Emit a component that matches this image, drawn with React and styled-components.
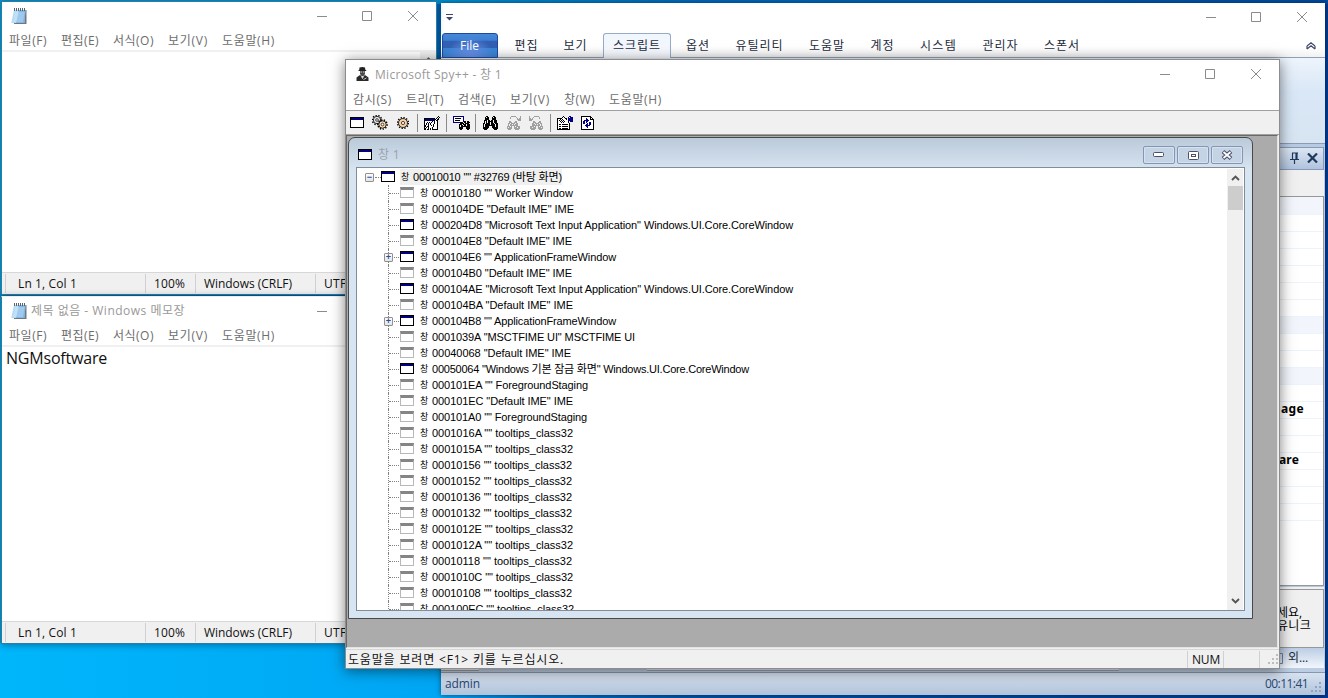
import { useLayoutEffect, useRef, useState } from "react";
import styled, { createGlobalStyle, css } from "styled-components";

const TREE = [
  { text: '00010180 "" Worker Window', w: 141 },
  { text: '000104DE "Default IME" IME', w: 142 },
  { text: '000204D8 "Microsoft Text Input Application" Windows.UI.Core.CoreWindow', w: 361, on: true },
  { text: '000104E8 "Default IME" IME', w: 140 },
  { text: '000104E6 "" ApplicationFrameWindow', w: 184, on: true, plus: true },
  { text: '000104B0 "Default IME" IME', w: 140 },
  { text: '000104AE "Microsoft Text Input Application" Windows.UI.Core.CoreWindow', w: 361, on: true },
  { text: '000104BA "Default IME" IME', w: 141 },
  { text: '000104B8 "" ApplicationFrameWindow', w: 184, on: true, plus: true },
  { text: '0001039A "MSCTFIME UI" MSCTFIME UI', w: 203 },
  { text: '00040068 "Default IME" IME', w: 139 },
  { text: '00050064 "Windows 기본 잠금 화면" Windows.UI.Core.CoreWindow', w: 317, on: true },
  { text: '000101EA "" ForegroundStaging', w: 156 },
  { text: '000101EC "Default IME" IME', w: 141 },
  { text: '000101A0 "" ForegroundStaging', w: 155 },
  { text: '0001016A "" tooltips_class32', w: 141 },
  { text: '0001015A "" tooltips_class32', w: 141 },
  { text: '00010156 "" tooltips_class32', w: 140 },
  { text: '00010152 "" tooltips_class32', w: 140 },
  { text: '00010136 "" tooltips_class32', w: 140 },
  { text: '00010132 "" tooltips_class32', w: 140 },
  { text: '0001012E "" tooltips_class32', w: 141 },
  { text: '0001012A "" tooltips_class32', w: 141 },
  { text: '00010118 "" tooltips_class32', w: 140 },
  { text: '0001010C "" tooltips_class32', w: 141 },
  { text: '00010108 "" tooltips_class32', w: 140 },
  { text: '000100EC "" tooltips_class32', w: 142 },
];

const NOTE_MENU = [["파일(F)", 38], ["편집(E)", 38], ["서식(O)", 41], ["보기(V)", 40], ["도움말(H)", 53]];
const SPY_MENU = [["감시(S)", 39], ["트리(T)", 38], ["검색(E)", 38], ["보기(V)", 40], ["창(W)", 31], ["도움말(H)", 53]];

// [label, slot width, text width]
const TABS = [
  ["편집", 49, 24],
  ["보기", 49, 24],
  ["스크립트", 73, 48],
  ["옵션", 50, 24],
  ["유틸리티", 73, 48],
  ["도움말", 62, 36],
  ["계정", 49, 24],
  ["시스템", 63, 37],
  ["관리자", 61, 36],
  ["스폰서", 62, 36],
];

const PROPS = Array.from({ length: 19 }, (_, i) => ({
  head: i === 0 || i === 7 || i === 10,
  text: i === 12 ? "age" : i === 15 ? "are" : "",
}));

const BINOCULARS = [
  "...##.....##...",
  "..#.##...#.##..",
  "..####...####..",
  "..####...####..",
  ".###.##.##.###.",
  ".#.#.#####.###.",
  ".#.#.##.##.###.",
  "##.####.###.###",
  "#.#####.####.##",
  "#.##########.##",
  "#.####...###.##",
  "######...######",
  "#####.....#####",
  ".###.......###.",
];

const FIND_GREY = [
  "....#####....#",
  "...#.....#...#",
  "...#......#.##",
  "..........####",
  "...........###",
  "..##....##....",
  "..###..###....",
  ".##.####.##...",
  ".#.##.#.###...",
  ".#.########...",
  "###.#..#.####.",
  "#.###..###.##.",
  "#####..######.",
  ".###....####..",
];

const FIND_WINDOW = [
  "nnnnnnnnnnn......",
  "nwwwwwwwwwn......",
  "nwkkkkkkwwn......",
  "nwwwwwwwwwn......",
  "nwkkkkkwwwn......",
  "nwwwwwwwwwn##.##.",
  "nnnnnnn###.##.###",
  ".......####.####.",
  "......###.###.###",
  "......#.##.##.###",
  "......#.#########",
  "......####...####",
  "......####...####",
  ".......##.....##.",
];

const HAND_WINDOW = [
  "..............#.",
  ".............#.#",
  "kkkkkkkkkkk.#w#.",
  "knnnnnnnnnn#w##.",
  "knnnnnnnnn#w#k..",
  "kwwwwwww#w#wwk..",
  "kww#w#w#ww#wwk..",
  "kw#w#w#www#wwk..",
  "kw#w#w#ww#wwwk..",
  "k#ww#ww#w#wwwk..",
  "k#w##wwww#wwwk..",
  "kw#w#www#wwwwk..",
  "k#ww#w#w#wwwwk..",
  "kk.kk.k.kkkkkk..",
];

const PROPERTIES = [
  "......#.....nn..",
  ".....#w#...nwnnn",
  "kkkk#www##.nnnnn",
  "kww#w#www#wnnnnn",
  "kw#w#w#wwwwnnnnn",
  "kww#w#w#wwwk.nnn",
  "kwww#w#wwwwk....",
  "kwwwwwwwwwwwk...",
  "kwkkwkkkkkkwk...",
  "kwwwwwwwwwwwk...",
  "kwkkwkkkkkkwk...",
  "kwwwwwwwwwwwk...",
  "kwkkwkkkkkkwk...",
  "kkkkkkkkkkkkk...",
];

const REFRESH = [
  "kkkkkkkkkk...",
  "kwwwwwwwwkk..",
  "kwwwwnwwwkwk.",
  "kwwwwnnwwkkkk",
  "kwwnnnnnwwwwk",
  "kwnnwnnwwwwwk",
  "kwnnwnwwnnwwk",
  "kwnnwwnwnnwwk",
  "kwwwwnnwnnwwk",
  "kwwwnnnnnwwwk",
  "kwwwwnnwwwwwk",
  "kwwwwwnwwwwwk",
  "kwwwwwwwwwwwk",
  "kkkkkkkkkkkkk",
];

const COLORS = { "#": "#000", k: "#000", n: "#000080", w: "#fff" };

function Pixels({ map, color }) {
  return (
    <svg width={map[0].length} height={map.length} shapeRendering="crispEdges">
      {map.flatMap((row, y) =>
        [...row].map((c, x) =>
          c === "." ? null : <rect key={`${x}-${y}`} x={x} y={y} width="1" height="1" fill={color || COLORS[c]} />
        )
      )}
    </svg>
  );
}

// Spreads its letters so that the text takes exactly w pixels
function Fit({ w, children }) {
  const ref = useRef(null);
  const [spacing, setSpacing] = useState(0);

  useLayoutEffect(() => {
    const natural = ref.current.getBoundingClientRect().width;
    setSpacing((w - natural) / [...children].length);
  // eslint-disable-next-line react-hooks/exhaustive-deps
  }, []);

  return (
    <FitBox $w={w}>
      <span ref={ref} style={{ letterSpacing: spacing }}>{children}</span>
    </FitBox>
  );
}

function NoteIcon() {
  return (
    <svg width="16" height="17" viewBox="0 0 16 17">
      <path d="M3 2h12.500v14H3z" fill="#6f7880" />
      <path d="M3 2h11.500L13.500 15H.3z" fill="#b4daf5" />
      <path d="M8 2h6.500l-1 13H5z" fill="#5f9fdc" opacity=".6" />
      <path d="M4 5h9.500M3.600 7h9.500M3.300 9h9.500M3 11h9.500M2 13h10" stroke="#d9ecfa" strokeWidth=".7" />
      <path d="M3.500 0v3M5.500 0v3M7.500 0v3M9.500 0v3M11.500 0v3M13.500 0v3" stroke="#59636b" strokeWidth="1" />
    </svg>
  );
}

function SpyIcon() {
  return (
    <svg width="13" height="15" viewBox="0 0 13 15">
      <path d="M3.500.5Q6.500-.5 9 .5l.4 2.500h.8v1H2.500V3h.7z" fill="#222" />
      <path d="M4 4h5v3L7.500 9h-2L4 7z" fill="#4a4a4a" />
      <path d="M4.500 5h1.500M7 5h1.500" stroke="#ccc" />
      <path d="M.5 10.500L4 8l2.500 2L9 8l3.500 2.500v3.500H.5z" fill="#2a2a2a" />
      <path d="M5.500 9.500l1 2 1-2zM7.500 12.500L10.500 11" stroke="#ddd" fill="#ddd" strokeWidth=".8" />
    </svg>
  );
}

function Gear({ x, y, r, fill }) {
  return (
    <g>
      <circle cx={x} cy={y} r={r + 0.6} fill="none" stroke="#000" strokeWidth="1.500" strokeDasharray="1.300 1.500" />
      <circle cx={x} cy={y} r={r - 0.3} fill={fill} stroke="#000" strokeWidth=".8" />
      <circle cx={x} cy={y} r={r * 0.33} fill="#fff" stroke="#333" strokeWidth=".9" />
    </g>
  );
}

function WindowButtons() {
  return (
    <Caption>
      <svg width="11" height="11"><path d="M1 5.500h10" stroke="#8b8b8b" /></svg>
      <svg width="11" height="11"><path d="M.5.5h9v9h-9z" stroke="#8b8b8b" fill="none" /></svg>
      <svg width="11" height="11"><path d="M0 0l10 10M10 0L0 10" stroke="#8b8b8b" /></svg>
    </Caption>
  );
}

function Arrow({ down }) {
  return (
    <svg width="9" height="7" viewBox="0 0 9 7">
      <path d={down ? "M1 1l3.500 3.500L8 1" : "M1 6l3.500-3.500L8 6"} fill="none" stroke="#555" strokeWidth="1.900" />
    </svg>
  );
}

function Grip({ color }) {
  return (
    <svg width="11" height="11" fill={color}>
      {[[8, 0], [8, 4], [4, 4], [8, 8], [4, 8], [0, 8]].map(([x, y]) => (
        <rect key={`${x}${y}`} x={x} y={y} width="2" height="2" />
      ))}
    </svg>
  );
}

function NoteStatus() {
  return (
    <NoteBar>
      <Cell $w={140} $pad={12}><Fit w={59}>Ln 1, Col 1</Fit></Cell>
      <Cell $w={50} $pad={8}><Fit w={31}>100%</Fit></Cell>
      <Cell $w={120} $pad={8}><Fit w={88}>Windows (CRLF)</Fit></Cell>
      <Cell $w={100} $pad={8}><Fit w={34}>UTF-8</Fit></Cell>
    </NoteBar>
  );
}

function Notepad({ top, height, title, text, scroll }) {
  return (
    <NoteWindow $top={top} $h={height}>
      <NoteTitle>
        <NoteIcon />
        <TitleText>{title && <Fit w={154}>{title}</Fit>}</TitleText>
        <WindowButtons />
      </NoteTitle>
      <NoteMenu>{NOTE_MENU.map(([label, w]) => <Fit key={label} w={w}>{label}</Fit>)}</NoteMenu>
      <NoteBody>
        <NoteText>{text && <Fit w={101}>{text}</Fit>}</NoteText>
        {scroll && <NoteScroll><Arrow /></NoteScroll>}
      </NoteBody>
      <NoteStatus />
    </NoteWindow>
  );
}

function MacroTool() {
  return (
    <MainWindow>
      <MainTitle>
        <svg width="8" height="7"><path d="M0 .5h7" stroke="#40466b" /><path d="M0 3h7L3.500 6.500z" fill="#40466b" /></svg>
        <WindowButtons />
      </MainTitle>
      <Tabs>
        <FileTab><Fit w={19}>File</Fit></FileTab>
        {TABS.map(([label, w, textWidth]) => (
          <Tab key={label} $w={w} $active={label === "스크립트"}>
            <Fit w={textWidth}>{label}</Fit>
          </Tab>
        ))}
        <Collapse>
          <svg width="10" height="8"><path d="M1 4L5 .8 9 4M1 7l4-3.200L9 7M1 4v3M9 4v3" fill="none" stroke="#40466b" strokeWidth="1.200" /></svg>
        </Collapse>
      </Tabs>
      <Ribbon />
      <Dock>
        <DockTitle>
          <svg width="9" height="12"><path d="M2 1h6M2.500 1v6M6 1v6M7 1v6M0 7.500h9M4.500 8v4" stroke="#1e395b" strokeWidth="1.200" /></svg>
          <svg width="11" height="10"><path d="M1 .5l9 9M10 .5l-9 9" stroke="#1e395b" strokeWidth="2.200" /></svg>
        </DockTitle>
        <DockTools />
        <PropertyList>
          {PROPS.map((p, i) => (
            <Property key={i} $head={p.head} $wide={i === 0} $shift={p.text === "age"}>
              {p.text && <Fit w={p.text === "age" ? 23 : 20}>{p.text}</Fit>}
            </Property>
          ))}
        </PropertyList>
        <Hint>
          <Fit w={25}>세요,</Fit>
          <Fit w={34}>유니크</Fit>
        </Hint>
        <DockTab>
          <svg width="7" height="11"><path d="M0 .5h5.500v10H0M2 2v7" fill="none" stroke="#6a86ad" /></svg>
          <Fit w={20}>외...</Fit>
        </DockTab>
      </Dock>
      <BottomEdge><i /><b /></BottomEdge>
      <MainStatus>
        <Fit w={35}>admin</Fit>
        <span />
        <Fit w={43}>00:11:41</Fit>
        <Grip color="#8fa5c6" />
      </MainStatus>
    </MainWindow>
  );
}

function Node({ node }) {
  return (
    <TreeRow>
      <Branch>
        {node.plus && <Expander>+</Expander>}
      </Branch>
      <WinIcon $on={node.on} />
      <NodeText>
        <Han>창</Han>
        <Fit w={node.w}>{node.text}</Fit>
      </NodeText>
    </TreeRow>
  );
}

function Spy() {
  return (
    <SpyWindow>
      <SpyTitle>
        <SpyIcon />
        <TitleText><Fit w={127}>Microsoft Spy++ - 창 1</Fit></TitleText>
        <WindowButtons />
      </SpyTitle>
      <SpyMenu>{SPY_MENU.map(([label, w]) => <Fit key={label} w={w}>{label}</Fit>)}</SpyMenu>
      <Toolbar>
        <Tool $w={22}><WinIcon $on /></Tool>
        <Tool $w={25}>
          <svg width="16" height="15" viewBox="0 0 16 15">
            <Gear x={5} y={5} r={4} fill="#e4e4e4" />
            <Gear x={10.5} y={9.5} r={4} fill="#f8d5a8" />
          </svg>
        </Tool>
        <Tool $w={20}>
          <svg width="12" height="12" viewBox="0 0 12 12">
            <Gear x={6} y={6} r={4.8} fill="#f8d0a0" />
          </svg>
        </Tool>
        <Sep />
        <Tool $w={22}><Pixels map={HAND_WINDOW} /></Tool>
        <Sep />
        <Tool $w={22}><Pixels map={FIND_WINDOW} /></Tool>
        <Sep $tight />
        <Tool $w={24}><Pixels map={BINOCULARS} /></Tool>
        <Tool $w={22}><Pixels map={FIND_GREY} color="#a0a0a0" /></Tool>
        <Flip $w={21}><Pixels map={FIND_GREY} color="#a0a0a0" /></Flip>
        <Sep />
        <Tool $w={24}><Pixels map={PROPERTIES} /></Tool>
        <Tool $w={14}><Pixels map={REFRESH} /></Tool>
      </Toolbar>
      <Mdi>
        <Child>
          <ChildTitle>
            <WinIcon $on />
            <span><Fit w={22}>창 1</Fit></span>
            <ChildButton><svg width="12" height="6"><rect x=".5" y=".5" width="10" height="4" rx="1" fill="#fff" stroke="#4a5068" /></svg></ChildButton>
            <ChildButton><svg width="11" height="9"><rect x=".5" y=".5" width="10" height="8" rx="1" fill="#fff" stroke="#4a5068" /><rect x="3.500" y="3.500" width="4" height="2" fill="#fff" stroke="#4a5068" /></svg></ChildButton>
            <ChildButton>
              <svg width="12" height="10"><path d="M2 1.500l8 7M10 1.500l-8 7" stroke="#4a5068" strokeWidth="4" /><path d="M2.500 2l7 6M9.500 2l-7 6" stroke="#fff" strokeWidth="1.800" /></svg>
            </ChildButton>
          </ChildTitle>
          <Client>
            <Tree>
              <Root>
                <Expander>−</Expander>
                <RootLine />
                <WinIcon $on />
                <RootText>
                  <Han>창</Han>
                  <Fit w={149}>00010010 "" #32769 (바탕 화면)</Fit>
                </RootText>
              </Root>
              {TREE.map((node) => <Node key={node.text} node={node} />)}
            </Tree>
            <Scroll>
              <Arrow />
              <Thumb />
              <Arrow down />
            </Scroll>
          </Client>
        </Child>
      </Mdi>
      <SpyStatus>
        <Message><Fit w={216}>{"도움말을 보려면 <F1> 키를 누르십시오."}</Fit></Message>
        <Cell $w={36} $pad={4}><Fit w={28}>NUM</Fit></Cell>
        <Cell $w={36} $pad={0} />
        <Cell $w={20} $pad={8}><Grip color="#bdbdbd" /></Cell>
      </SpyStatus>
    </SpyWindow>
  );
}

function App() {
  return (
    <Desktop>
      <GlobalStyle />
      <MacroTool />
      <Notepad top={1} height={294} scroll />
      <Notepad top={296} height={348} title="제목 없음 - Windows 메모장" text="NGMsoftware" />
      <Spy />
    </Desktop>
  );
}

const GlobalStyle = createGlobalStyle`
  * {
    box-sizing: border-box;
  }
  body {
    margin: 0;
    font: 12px/16px "Open Sans", "Noto Sans CJK KR", sans-serif;
    color: #111;
    overflow: hidden;
  }
  svg {
    display: block;
    flex: none;
  }
`;

const Desktop = styled.div`
  position: relative;
  width: 1328px;
  height: 698px;
  overflow: hidden;
  background:
    linear-gradient(90deg, #0896cf 0, #0090cc 440px, #0068b8 700px, #0060b0 1000px, #004a9c 1328px) 0 0 / 100% 4px no-repeat,
    linear-gradient(90deg, #0a88b8, #0060a8 440px) 0 294px / 440px 3px no-repeat,
    linear-gradient(180deg, #0068b8, #0060b0) 436px 0 / 5px 100px no-repeat,
    linear-gradient(90deg, #00b6fb 0, #00a6f4 440px, #0070c0 540px, #0050a0 700px, #003a8c 1328px) 0 643px / 100% 55px no-repeat,
    linear-gradient(90deg, #009fdc 0, #009fdc 440px, #003a94 441px);
`;

const FitBox = styled.span`
  display: inline-block;
  width: ${(p) => p.$w}px;
  flex: none;
  white-space: pre;
`;

const Window = styled.div`
  position: absolute;
  display: flex;
  flex-direction: column;
  overflow: hidden;
  background: #fff;
`;

const Caption = styled.div`
  display: flex;
  gap: 35px;
  margin-left: auto;
`;

const TitleText = styled.div`
  color: #999;
`;

const Menu = styled.div`
  display: flex;
  align-items: center;
  flex: none;
  gap: 14px;
  color: #6d6d6d;
`;

/* Notepad */

const NoteWindow = styled(Window)`
  left: 1px;
  top: ${(p) => p.$top}px;
  width: 436px;
  height: ${(p) => p.$h}px;
  border: 1px solid #2c7da3;
  border-top-color: ${(p) => (p.$top > 10 ? "#e8f0f4" : "#2c7da3")};
  box-shadow: 0 1px 7px rgba(0, 30, 60, 0.45);
`;

const NoteTitle = styled.div`
  display: flex;
  align-items: center;
  flex: none;
  height: 28px;
  padding: 0 17px 0 9px;
  gap: 4px;
`;

const NoteMenu = styled(Menu)`
  height: 20px;
  padding: 2px 0 0 7px;
`;

const NoteBody = styled.div`
  display: flex;
  flex: 1;
  border-top: 2px solid #f0f0f0;
`;

const NoteText = styled.div`
  flex: 1;
  padding: 3px 4px;
  font-size: 16px;
  line-height: 17px;
`;

const NoteScroll = styled.div`
  width: 16px;
  padding: 4px;
  background: #f0f0f0;
`;

const NoteBar = styled.div`
  display: flex;
  flex: none;
  height: 22px;
  padding: 1px 0 1px 3px;
  background: #f0f0f0;
  border-top: 1px solid #d7d7d7;
  overflow: hidden;
`;

const Cell = styled.div`
  display: flex;
  align-items: center;
  flex: none;
  width: ${(p) => p.$w}px;
  padding-left: ${(p) => p.$pad}px;
  border-left: 1px solid #d0d0d0;
`;

/* Macro tool */

const MainWindow = styled(Window)`
  left: 441px;
  top: 3px;
  width: 884px;
  height: 692px;
  background: #cfddee;
  box-shadow: 0 0 5px rgba(0, 20, 60, 0.6);
  color: #1e2b3c;
`;

const MainTitle = styled.div`
  display: flex;
  align-items: center;
  flex: none;
  height: 29px;
  padding: 0 17px 0 5px;
  background: #fff;
`;

const Tabs = styled.div`
  display: flex;
  flex: none;
  height: 26px;
  padding-left: 1px;
  background: linear-gradient(#fff 60%, #f1f1f1);
  border-bottom: 1px solid #8fa0b5;
`;

const FileTab = styled.div`
  display: flex;
  align-items: center;
  justify-content: center;
  width: 56px;
  height: 25px;
  margin: 1px 4px 0 0;
  padding-right: 1px;
  color: #fff;
  border: 1px solid #1f48a1;
  border-radius: 3px 3px 0 0;
  background:
    radial-gradient(ellipse at 50% 120%, #6c98ea 0, #5b8be2 30%, transparent 65%),
    linear-gradient(#4788d8 0, #3c7fd2 28%, #3460b4 29%, #3460b4 62%, #3b84d6 63%);
`;

const Tab = styled.div`
  display: flex;
  align-items: center;
  justify-content: center;
  width: ${(p) => p.$w}px;
  height: 25px;
  padding-top: 2px;
  ${(p) => p.$active && css`
    width: 68px;
    margin: 1px 2px 0 3px;
    padding: 0;
    border: 1px solid #97abc6;
    border-bottom: 0;
    border-radius: 3px 3px 0 0;
    background: linear-gradient(#f0f6fd, #f7faff);
  `}
`;

const Collapse = styled.div`
  margin: 10px 9px 0 auto;
`;

const Ribbon = styled.div`
  flex: none;
  height: 86px;
  background: linear-gradient(#edf4fc, #d9e7f6 40%, #d7e5f3);
  border-bottom: 1px solid #8a9bb3;
`;

const Dock = styled.div`
  display: flex;
  flex-direction: column;
  align-self: flex-end;
  flex: 1;
  width: 60px;
  padding: 3px 1px 0 0;
  background: #b8cae2;
`;

const DockTitle = styled.div`
  display: flex;
  align-items: center;
  justify-content: flex-end;
  gap: 8px;
  height: 23px;
  flex: none;
  padding: 0 5px 1px 0;
  border: 1px solid #859ab9;
  border-left: 0;
  background: linear-gradient(#dbe5f3, #b0c3de);
`;

const DockTools = styled.div`
  flex: none;
  height: 26px;
  background: #f0f0f0;
`;

const PropertyList = styled.div`
  flex: none;
  height: 390px;
  border: 1px solid #979797;
  border-left: 0;
  background: #fff;
`;

const Property = styled.div`
  height: ${(p) => (p.$wide ? 18 : 17)}px;
  padding-left: ${(p) => (p.$shift ? 16 : 14)}px;
  background: ${(p) => (p.$head ? "#f2f6fc" : "#fff")};
  border-bottom: 1px solid #edf3fb;
  font: bold 12px/13px "Noto Sans", sans-serif;
  color: #000;
`;

const Hint = styled.div`
  display: flex;
  flex-direction: column;
  height: 59px;
  margin-top: 3px;
  padding: 16px 0 0 12px;
  line-height: 13px;
  border: 1px solid #979797;
  border-left: 0;
  background: #f0f0f0;
  box-shadow: 0 -2px #f0f0f0;
  color: #000;
`;

const DockTab = styled.div`
  display: flex;
  align-items: center;
  gap: 4px;
  height: 20px;
  padding-left: 12px;
  background: linear-gradient(#bccde4, #f3f7fc);
`;

const BottomEdge = styled.div`
  display: flex;
  justify-content: space-between;
  flex: none;
  height: 5px;
  background: #bccce2;
  border-bottom: 1px solid #8797b0;
  i {
    width: 38px;
    height: 3px;
    background: #f0f0f0;
    border-bottom: 1px solid #9a9a9a;
  }
  b {
    width: 472px;
    height: 3px;
    margin-right: 206px;
    background: #e8edf5;
    border-bottom: 1px solid #9aa5b8;
  }
`;

const MainStatus = styled.div`
  display: flex;
  align-items: center;
  flex: none;
  height: 22px;
  padding: 0 3px 0 4px;
  background: linear-gradient(#d7e2f0, #b1c3da);
  color: #28456f;
  span:nth-child(2) {
    flex: 1;
  }
  svg {
    margin: 6px 0 0 3px;
  }
`;

/* Spy++ */

const SpyWindow = styled(Window)`
  left: 345px;
  top: 59px;
  width: 935px;
  height: 610px;
  border: 1px solid #8d8d8d;
  background: #f0f0f0;
  box-shadow: 0 2px 13px rgba(0, 0, 0, 0.5);
`;

const SpyTitle = styled.div`
  display: flex;
  align-items: center;
  flex: none;
  gap: 6px;
  height: 29px;
  padding: 0 17px 0 10px;
  background: #fff;
`;

const SpyMenu = styled(Menu)`
  height: 21px;
  padding-left: 7px;
  background: #fff;
`;

const Toolbar = styled.div`
  display: flex;
  align-items: center;
  flex: none;
  height: 25px;
  padding-left: 4px;
  border-top: 1px solid #a0a0a0;
  border-bottom: 1px solid #a0a0a0;
`;

const Tool = styled.div`
  display: flex;
  flex: none;
  width: ${(p) => p.$w}px;
`;

const Flip = styled(Tool)`
  svg {
    transform: scaleX(-1);
  }
`;

const Sep = styled.div`
  width: 1px;
  height: 18px;
  flex: none;
  margin-right: ${(p) => (p.$tight ? 7 : 6)}px;
  background: #8a8a8a;
`;

const Mdi = styled.div`
  flex: none;
  height: 513px;
  padding: 1px 0 0 1px;
  margin-right: 1px;
  border: 1px solid #696969;
  border-right-color: #e3e3e3;
  border-bottom-color: #e3e3e3;
  background: #ababab;
`;

const Child = styled.div`
  width: 905px;
  height: 482px;
  padding: 0 7px 7px;
  border: 1px solid #484848;
  border-radius: 7px 7px 0 0;
  background: linear-gradient(#bbcad9, #d7e4f2 32px);
`;

const ChildTitle = styled.div`
  display: flex;
  align-items: center;
  height: 29px;
  padding: 5px 2px 0;
  gap: 2px;
  > span {
    flex: 1;
    padding-left: 4px;
    color: #98a3ae;
  }
`;

const ChildButton = styled.div`
  display: flex;
  align-items: center;
  justify-content: center;
  width: 32px;
  height: 18px;
  border: 1px solid #8496b4;
  border-radius: 2px;
  box-shadow: inset 0 0 0 1px #d6e2f0;
  background: #c5d4e5;
`;

const Client = styled.div`
  display: flex;
  height: 444px;
  padding: 1px 1px 0 0;
  border: 1px solid #828b98;
  background: #fff;
  overflow: hidden;
`;

const Tree = styled.div`
  flex: 1;
  height: 441px;
  padding-left: 8px;
  overflow: hidden;
  font: 11px/16px "Liberation Sans", "Noto Sans CJK KR", sans-serif;
  color: #000;
`;

const Root = styled.div`
  display: flex;
  align-items: center;
  height: 16px;
`;

const RootLine = styled.div`
  width: 6px;
  margin: 0 0 0 1px;
  border-top: 1px dotted #808080;
`;

const RootText = styled.div`
  display: flex;
  height: 16px;
  margin-left: 5px;
  padding-left: 1px;
  background: #f0f0f0;
`;

const TreeRow = styled.div`
  display: flex;
  align-items: center;
  height: 16px;
  padding-left: 19px;
`;

const Branch = styled.div`
  position: relative;
  display: flex;
  align-items: center;
  width: 16px;
  height: 16px;
  &::before {
    content: "";
    position: absolute;
    left: 4px;
    top: 0;
    height: 16px;
    border-left: 1px dotted #808080;
  }
  &::after {
    content: "";
    position: absolute;
    left: 5px;
    right: 1px;
    top: 8px;
    border-top: 1px dotted #808080;
  }
`;

const Expander = styled.div`
  position: relative;
  z-index: 1;
  width: 9px;
  height: 9px;
  flex: none;
  border: 1px solid #919191;
  border-radius: 1px;
  background: linear-gradient(#fff, #e4e4e4);
  color: #2b4f9e;
  font: bold 9px/7px "Liberation Sans", sans-serif;
  text-align: center;
`;

const WinIcon = styled.div`
  width: 14px;
  height: 11px;
  flex: none;
  margin-bottom: 1px;
  border: 1px solid ${(p) => (p.$on ? "#000" : "#b8b8b8")};
  border-top: 3px solid ${(p) => (p.$on ? "#000080" : "#858585")};
  background: #fff;
  ${(p) => p.$on && css`
    border-top: 1px solid #000;
    box-shadow: inset 0 2px #000080;
  `}
`;

const NodeText = styled.div`
  display: flex;
  margin-left: 6px;
`;

const Han = styled.span`
  width: 12px;
  font-size: 9px;
`;

const Scroll = styled.div`
  display: flex;
  flex-direction: column;
  align-items: center;
  width: 16px;
  height: 441px;
  padding: 5px 0;
  background: #f0f0f0;
  svg:last-child {
    margin-top: auto;
  }
`;

const Thumb = styled.div`
  width: 15px;
  height: 24px;
  margin-top: 5px;
  background: #cdcdcd;
`;

const SpyStatus = styled.div`
  display: flex;
  flex: 1;
  margin-top: 1px;
  padding-top: 1px;
  border-top: 1px solid #d7d7d7;
`;

const Message = styled.div`
  flex: 1;
  padding: 1px 0 0 2px;
`;

export default App;
